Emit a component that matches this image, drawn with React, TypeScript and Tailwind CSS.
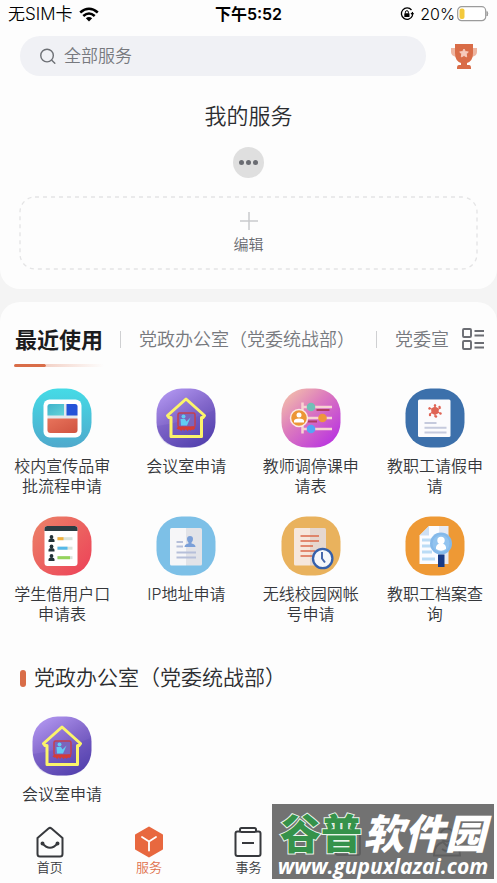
import React, { useState } from "react";

type IconProps = { id: string };
type Service = { name: string; Icon: (p: IconProps) => React.ReactElement };

function Tile({ fill, children }: { fill: string; children: React.ReactNode }) {
  return (
    <svg viewBox="0 0 60 60" className="size-[60px]" aria-hidden="true">
      <rect x="0.5" y="0.5" width="59" height="59" rx="25" fill={fill} />
      {children}
    </svg>
  );
}

function PosterIcon({ id }: IconProps) {
  return (
    <Tile fill={`url(#${id}a)`}>
      <defs>
        <linearGradient id={`${id}a`} x1="0" y1="0" x2="0" y2="1">
          <stop offset="0" stopColor="#45dbe6" />
          <stop offset="1" stopColor="#4fa9cc" />
        </linearGradient>
        <linearGradient id={`${id}b`} x1="0" y1="0" x2="1" y2="1">
          <stop offset="0" stopColor="#3fb2cb" />
          <stop offset="1" stopColor="#63d3d8" />
        </linearGradient>
        <linearGradient id={`${id}c`} x1="0" y1="0" x2="1" y2="1">
          <stop offset="0" stopColor="#e8735b" />
          <stop offset="1" stopColor="#cf5340" />
        </linearGradient>
      </defs>
      <rect x="11.5" y="11.5" width="38" height="38" rx="6" fill="#fff" />
      <rect x="15.5" y="16" width="30" height="29" rx="3" fill="#e3e8ec" />
      <path d="M18 16h14v11.5H15.5V18.5A2.5 2.5 0 0 1 18 16Z" fill={`url(#${id}b)`} />
      <path d="M34.5 16H43a2.5 2.5 0 0 1 2.5 2.5v9h-11Z" fill="#2453d8" />
      <path d="M15.500 30.500h30V42a3 3 0 0 1-3 3h-24a3 3 0 0 1-3-3Z" fill={`url(#${id}c)`} />
    </Tile>
  );
}

function MeetingIcon({ id }: IconProps) {
  return (
    <Tile fill={`url(#${id}a)`}>
      <defs>
        <linearGradient id={`${id}a`} x1="0.1" y1="0" x2="0.7" y2="1">
          <stop offset="0" stopColor="#b59af3" />
          <stop offset="0.5" stopColor="#8368cb" />
          <stop offset="1" stopColor="#5442ae" />
        </linearGradient>
      </defs>
      <path d="M1 38Q30 34 59 22V34C58 51 49 59.500 34 59.500H26C11 59.500 2 52 1 38Z" fill="#5b46b4" opacity="0.2" />
      <path
        d="M30 11 L48.500 27.500 L47 29.500 H45.500 V48.500 H15 V29.500 H13 L11.500 27.500 Z"
        fill="none"
        stroke="#fbf46a"
        strokeWidth="3"
        strokeLinejoin="round"
      />
      <rect x="22" y="25" width="17" height="14" rx="1.500" fill="#7b65bd" stroke="#c4404f" strokeWidth="1.500" />
      <path d="M21.500 41q1.500-2 3.500 0 1-2 3 0 1.500-2 3.500 0 1-2 3 0 2-2 4 0" fill="none" stroke="#d63c35" strokeWidth="2.600" />
      <circle cx="27.500" cy="28.500" r="2" fill="#62cdf3" />
      <path d="M24.500 31h4.500l1.500 2.500 4-4-3.500 8H25Z" fill="#62cdf3" />
    </Tile>
  );
}

function CourseIcon({ id }: IconProps) {
  return (
    <Tile fill={`url(#${id}a)`}>
      <defs>
        <linearGradient id={`${id}a`} x1="0.05" y1="0.1" x2="0.8" y2="0.9">
          <stop offset="0" stopColor="#f2bdab" />
          <stop offset="0.45" stopColor="#dc7abe" />
          <stop offset="1" stopColor="#bd3cdc" />
        </linearGradient>
      </defs>
      <g stroke="#f7d3d2" strokeWidth="2.500">
        <path d="M21 19h30M21 30h30M21 41h30M21.500 14.500v9M21.500 36.500v9" />
      </g>
      <path d="M35.500 22h13M26.500 33.500H36" stroke="#b23b62" strokeWidth="2" />
      <circle cx="30" cy="19" r="4.300" fill="#70bfb6" />
      <circle cx="41.500" cy="30" r="4.300" fill="#ee963b" />
      <circle cx="30" cy="41" r="4.300" fill="#55a5f5" />
      <circle cx="18" cy="30" r="8.500" fill="#ec9636" stroke="#fbe9e5" strokeWidth="1.500" />
      <circle cx="18" cy="27" r="2.500" fill="#fff" />
      <path d="M13 34.500v-1.500q0-2.500 5-2.500t5 2.500v1.500Z" fill="#fff" />
    </Tile>
  );
}

function LeaveIcon() {
  return (
    <Tile fill="#3c70ab">
      <rect x="13" y="11.500" width="32.500" height="37.500" rx="1.500" fill="#fbfbfd" />
      <g stroke="#df6455" strokeWidth="1.300" strokeLinecap="round">
        <path d="M30 17v11.500M24.500 20l11 5.500M24.500 26l11-6" />
      </g>
      <circle cx="30" cy="22.700" r="3.800" fill="#df6455" />
      <g fill="#df6455">
        <circle cx="30" cy="17.500" r="1.200" />
        <circle cx="34.500" cy="19" r="1.200" />
        <circle cx="35.500" cy="25.500" r="1.200" />
        <circle cx="31" cy="28.500" r="1.200" />
        <circle cx="25" cy="27" r="1.200" />
        <circle cx="24.500" cy="20.500" r="1.200" />
      </g>
      <path d="M19.500 35H31.500M19.500 39.700H41.500M19.500 44.500H41.500" stroke="#c5cadd" strokeWidth="2" />
    </Tile>
  );
}

function HouseholdIcon({ id }: IconProps) {
  const rows = [
    { y: 22.5, w: 6, color: "#f0b03c" },
    { y: 32, w: 10, color: "#55b9e9" },
    { y: 41.5, w: 12.5, color: "#95d45c" },
  ];
  return (
    <Tile fill={`url(#${id}a)`}>
      <defs>
        <linearGradient id={`${id}a`} x1="0" y1="0" x2="1" y2="1">
          <stop offset="0" stopColor="#eb8468" />
          <stop offset="1" stopColor="#ed4058" />
        </linearGradient>
      </defs>
      <rect x="12.500" y="10" width="33" height="40" rx="3" fill="#fff" />
      <path d="M12.500 15v-2a3 3 0 0 1 3-3h27a3 3 0 0 1 3 3v2Z" fill="#2c3d43" />
      {rows.map((r) => (
        <g key={r.y}>
          <circle cx="19.500" cy={r.y - 1.5} r="1.900" fill="#223238" />
          <path d={`M16.500 ${r.y + 3.5}v-1.500q0-2 3-2t3 2v1.500Z`} fill="#223238" />
          <rect x="25.500" y={r.y - 1.3} width="15" height="3" fill="#d9e4dc" />
          <rect x="25.500" y={r.y - 1.3} width={r.w} height="3" fill={r.color} />
        </g>
      ))}
    </Tile>
  );
}

function IpIcon() {
  return (
    <Tile fill="#7dc0e7">
      <path d="M15.500 12H30v37.500H15.500a1.500 1.500 0 0 1-1.500-1.500V13.500a1.500 1.500 0 0 1 1.500-1.500Z" fill="#f6f6f8" />
      <path d="M30 12h14.500a1.500 1.500 0 0 1 1.500 1.500V48a1.500 1.500 0 0 1-1.500 1.500H30Z" fill="#e2e3e8" />
      <path d="M20.500 26H27M20.500 30.500H27M20.500 36.500H40M20.500 41.500H40" stroke="#b6bfd9" strokeWidth="1.800" />
      <path d="M31 23a3 3 0 0 1 6 0q0 2.500-1.500 3.500v1q4 .5 4 3.500H28.500q0-3 4-3.500v-1Q31 25.500 31 23Z" fill="#7a9fd8" />
    </Tile>
  );
}

function NetworkIcon() {
  return (
    <Tile fill="#e9b25d">
      <path d="M14.500 12H29v37.500H14.500A1.500 1.500 0 0 1 13 48V13.500a1.500 1.500 0 0 1 1.500-1.500Z" fill="#f6e7dc" />
      <path d="M29 12h14.500a1.500 1.500 0 0 1 1.500 1.500V48a1.500 1.500 0 0 1-1.500 1.500H29Z" fill="#e5d7cf" />
      <path d="M19.500 20H38M19.500 25H38M19.500 30H32M19.500 35H34M19.500 40H31.500" stroke="#dc6b4b" strokeWidth="1.700" />
      <circle cx="41.700" cy="42.500" r="9.700" fill="#f5f7fb" stroke="#3560ab" strokeWidth="2.300" />
      <path d="M41 36v6.500l3 4" fill="none" stroke="#4668ac" strokeWidth="2" />
    </Tile>
  );
}

function ArchiveIcon() {
  return (
    <Tile fill="#ee9935">
      <path d="M24 10h10v38H14.500V19.500Z" fill="#fbfcff" />
      <path d="M34 10h9.500v38H34Z" fill="#e6eaf4" />
      <path d="M24 10v9.500h-9.500Z" fill="#cddff3" />
      <path d="M17 24h12M17 30h9M17 36h10M17 43h13" stroke="#bbdcf6" strokeWidth="3" />
      <circle cx="36" cy="27.500" r="11" fill="#84b9ea" />
      <circle cx="36" cy="27.500" r="8.500" fill="#91c3ef" />
      <circle cx="36" cy="24.500" r="3.700" fill="#fff" />
      <path d="M31 33q-.5-4 3-5.200h4q3.500 1.200 3 5.200-5 3.500-10 0Z" fill="#fff" />
      <path d="M33 38.500h6.500V51H33Z" fill="#173a86" />
    </Tile>
  );
}

const recent: Service[] = [
  { name: "校内宣传品审批流程申请", Icon: PosterIcon },
  { name: "会议室申请", Icon: MeetingIcon },
  { name: "教师调停课申请表", Icon: CourseIcon },
  { name: "教职工请假申请", Icon: LeaveIcon },
  { name: "学生借用户口申请表", Icon: HouseholdIcon },
  { name: "IP地址申请", Icon: IpIcon },
  { name: "无线校园网帐号申请", Icon: NetworkIcon },
  { name: "教职工档案查询", Icon: ArchiveIcon },
];

const office: Service[] = [{ name: "会议室申请", Icon: MeetingIcon }];

function ServiceGrid({ items, prefix }: { items: Service[]; prefix: string }) {
  return (
    <ul className="grid grid-cols-4 gap-y-5">
      {items.map(({ name, Icon }, i) => (
        <li key={name} className="flex justify-center">
          <button type="button" className="flex w-24 flex-col items-center gap-2">
            <Icon id={`${prefix}${i}`} />
            <span className="text-[16px] leading-5 font-[350] text-[#35373b]">{name}</span>
          </button>
        </li>
      ))}
    </ul>
  );
}

function StatusBar() {
  return (
    <div className="grid h-7 grid-cols-3 items-center px-2 text-[16px] leading-5 text-black">
      <div className="flex items-center gap-1.5">
        <span className="text-[17px] font-[350]">无SIM卡</span>
        <svg viewBox="0 0 20 15" className="h-[15px] w-5" aria-hidden="true">
          <g fill="none" stroke="#000" strokeWidth="2.600">
            <path d="M1.200 5.500Q10-2 18.800 5.500" />
            <path d="M4.300 9Q10 4 15.700 9" />
          </g>
          <path d="M6.800 11.200Q10 8.600 13.200 11.200L10 14.500Z" />
        </svg>
      </div>
      <span className="text-center font-semibold">下午5:52</span>
      <div className="flex items-center justify-end gap-0.5">
        <svg viewBox="0 0 14 14" className="mr-1 size-3.5" aria-hidden="true">
          <path d="M11.500 3A5.700 5.700 0 1 0 12.300 9" fill="none" stroke="#000" strokeWidth="1.300" />
          <path d="M12.300 9A5.700 5.700 0 0 0 12.300 5" fill="none" stroke="#000" strokeWidth="1.300" />
          <path d="M10.500 6h3.500l-1.700 2.500Z" />
          <rect x="4.300" y="6.200" width="5.200" height="3.800" rx="0.500" />
          <path d="M5.400 6.500V5.200a1.500 1.500 0 0 1 3 0v1.300" fill="none" stroke="#000" strokeWidth="1" />
        </svg>
        <span className="font-[350]">20%</span>
        <svg viewBox="0 0 32 16" className="h-4 w-8" aria-hidden="true">
          <rect x="0.700" y="0.700" width="28" height="14" rx="4" fill="#fff" stroke="#9b9b9b" strokeWidth="1.200" />
          <rect x="2.500" y="2.500" width="5" height="10.500" rx="2" fill="#f3c93c" />
          <path d="M30 5.500q1.500 2.300 0 4.500Z" fill="#9b9b9b" stroke="#9b9b9b" />
        </svg>
      </div>
    </div>
  );
}

const navIcons = {
  home: (
    <g fill="none" stroke="#37393d" strokeWidth="2">
      <path d="M3.500 12 14.500 2.500q1.500-1.200 3 0L28.500 12V28q0 2.500-2.500 2.500H6Q3.500 30.500 3.500 28Z" strokeLinejoin="round" />
      <path d="M8.500 17.500q7.500 8.500 15 0" />
      <circle cx="8.500" cy="17.500" r="1" fill="#37393d" />
      <circle cx="23.500" cy="17.500" r="1" fill="#37393d" />
    </g>
  ),
  service: (
    <g>
      <path d="M16 1.500 29 9V23L16 30.500 3 23V9Z" fill="#e8683f" stroke="#e8683f" strokeWidth="2" strokeLinejoin="round" />
      <path d="M9 11 16 15.500V24.500M16 15.500 23 11" fill="none" stroke="#fff" strokeWidth="1.800" strokeLinecap="round" />
    </g>
  ),
  task: (
    <g fill="none" stroke="#37393d" strokeWidth="2" strokeLinejoin="round">
      <path d="M8 5.500H5.500q-2 0-2 2V28q0 2 2 2h21q2 0 2-2V7.500q0-2-2-2H24" />
      <rect x="8" y="2" width="16" height="4" rx="1.500" />
      <path d="M10 17h12" />
    </g>
  ),
  message: (
    <g fill="none" stroke="#37393d" strokeWidth="2">
      <rect x="4" y="5" width="24" height="24" rx="2" />
      <path d="M9 22h14" />
    </g>
  ),
  mine: (
    <g fill="none" stroke="#37393d" strokeWidth="2">
      <circle cx="16" cy="9" r="6.500" />
      <path d="M3 29.500q0-11 9-13.500l4 4 4-4q9 2.500 9 13.500Z" />
      <path d="M11 23q5 4 10 0" />
    </g>
  ),
};

const navItems: { label?: string; name: string; icon: keyof typeof navIcons }[] = [
  { label: "首页", name: "首页", icon: "home" },
  { label: "服务", name: "服务", icon: "service" },
  { label: "事务", name: "事务", icon: "task" },
  { name: "消息", icon: "message" },
  { name: "我的", icon: "mine" },
];

function Watermark() {
  return (
    <div className="pointer-events-none absolute right-[3px] bottom-1 flex h-[75px] w-[222px] flex-col items-center overflow-hidden bg-[#636363]/90 whitespace-nowrap">
      <div className="flex gap-px pt-[9px] text-[41px] leading-[42px] font-black">
        <span className="text-[#35924a] [-webkit-text-stroke:2px_#e9f5ea] [paint-order:stroke_fill]">谷普</span>
        <span className="text-white italic">软件园</span>
      </div>
      <div className="font-['Open_Sans','Noto_Sans',sans-serif] text-[21px] leading-[22px] font-bold text-white italic">
        www.gupuxlazai.com
      </div>
    </div>
  );
}

export default function App() {
  const [query, setQuery] = useState("");
  return (
    <div className="relative flex min-h-screen flex-col bg-[#f4f4f4] font-['Inter','Noto_Sans_CJK_SC',sans-serif]">
      <header className="rounded-b-[20px] bg-[#fdfdfd] pb-5">
        <StatusBar />
        <div className="flex items-center gap-5 pt-2 pr-4 pl-5">
          <label className="flex h-10 flex-1 items-center gap-2 rounded-full bg-[#f0f1f5] pl-5">
            <svg viewBox="0 0 17 17" className="size-[17px]" aria-hidden="true">
              <g fill="none" stroke="#6d7075" strokeWidth="1.500" strokeLinecap="round">
                <circle cx="7.500" cy="7.500" r="6.700" />
                <path d="m12.800 12.800 3 3" />
              </g>
            </svg>
            <input
              type="search"
              aria-label="全部服务"
              placeholder="全部服务"
              value={query}
              onChange={(e) => setQuery(e.target.value)}
              className="w-full bg-transparent text-[17px] leading-6 font-[350] text-gray-700 outline-none placeholder:text-[#77797e]"
            />
          </label>
          <button type="button" aria-label="奖杯" className="flex w-[35px] justify-center">
            <svg viewBox="0 0 28 28" className="size-7" aria-hidden="true">
              <path d="M6 6H1v4q0 4 5.500 5ZM22 6h5v4q0 4-5.500 5Z" fill="#eeb5a0" />
              <path d="M5 2h18v9q0 8-6 10v2h2q2 0 2 3v1H7v-1q0-3 2-3h2v-2Q5 19 5 11Z" fill="#d96c47" />
              <path
                d="m14 7 1.400 2.600 2.900.4-2.100 2 .5 2.900-2.700-1.400-2.700 1.400.5-2.900-2.100-2 2.900-.4Z"
                fill="#f7cabb"
                stroke="#f7cabb"
                strokeLinejoin="round"
              />
            </svg>
          </button>
        </div>
        <h1 className="mt-6 text-center text-[22px] leading-8 font-[350] text-[#2c2d30]">我的服务</h1>
        <div className="mt-[15px] flex justify-center">
          <button type="button" aria-label="更多" className="flex size-[31px] items-center justify-center gap-0.5 rounded-full bg-[#dfdfdf]">
            <i className="size-[5px] rounded-full bg-[#6a6c72]" />
            <i className="size-[5px] rounded-full bg-[#6a6c72]" />
            <i className="size-[5px] rounded-full bg-[#6a6c72]" />
          </button>
        </div>
        <div className="mt-[19px] px-5">
          <button type="button" className="relative flex h-18 w-full flex-col items-center justify-center gap-1">
            <svg className="absolute inset-0 h-full w-full overflow-visible" aria-hidden="true">
              <rect width="100%" height="100%" rx="15" fill="none" stroke="#e4e4e5" strokeWidth="1.300" strokeDasharray="4 4" />
            </svg>
            <svg viewBox="0 0 20 20" className="size-5" aria-hidden="true">
              <path d="M10 1v18M1 10h18" stroke="#c9cacd" strokeWidth="1.500" />
            </svg>
            <span className="text-[15px] leading-5 font-[350] text-[#66686d]">编辑</span>
          </button>
        </div>
      </header>

      <main className="mt-[13px] flex-1 rounded-t-[20px] bg-[#fdfdfd]">
        <div className="flex items-start pr-3 pl-[14px]">
          <div role="tablist" aria-label="服务分类" className="flex min-w-0 flex-1 items-start overflow-hidden pt-5 whitespace-nowrap">
            <button type="button" role="tab" aria-selected="true" className="shrink-0">
              <span className="block text-[22px] leading-9 font-bold text-[#1c1c1e]">最近使用</span>
              <span className="mt-[6px] flex h-[3px] w-[90px]">
                <span className="w-8 rounded-full bg-[#d96d48]" />
                <span className="flex-1 bg-linear-to-r from-[#f3d2c7] to-[#fdfdfd]" />
              </span>
            </button>
            <span className="mt-[9px] ml-4 h-[17px] w-px shrink-0 bg-[#cfd0d2]" />
            <button type="button" role="tab" aria-selected="false" className="ml-[18px] shrink-0 text-[18px] leading-9 font-[350] text-[#77797e]">
              党政办公室（党委统战部）
            </button>
            <span className="mt-[9px] ml-[21px] h-[17px] w-px shrink-0 bg-[#cfd0d2]" />
            <button type="button" role="tab" aria-selected="false" className="ml-[18px] shrink-0 text-[18px] leading-9 font-[350] text-[#77797e]">
              党委宣
            </button>
          </div>
          <button type="button" aria-label="全部分类" className="mt-[25px]">
            <svg viewBox="0 0 24 24" className="size-6" aria-hidden="true">
              <g fill="none" stroke="#6b6d73" strokeWidth="1.900">
                <rect x="2" y="2" width="8" height="8" rx="1" />
                <rect x="2" y="14" width="8" height="8" rx="1" />
                <path d="M13.500 4H23M13.500 8.500H23M13.500 16H23M13.500 20.500H23" />
              </g>
            </svg>
          </button>
        </div>

        <section aria-label="最近使用" className="mt-[21px]">
          <ServiceGrid items={recent} prefix="r" />
        </section>

        <section className="mt-[38px]">
          <h2 className="mb-[22px] flex items-center gap-2 pl-5 text-[21px] leading-8 font-[350] text-[#2c2d30]">
            <span className="h-[17px] w-[6px] rounded-full bg-[#d96d48]" />
            党政办公室（党委统战部）
          </h2>
          <ServiceGrid items={office} prefix="o" />
        </section>
      </main>

      <nav aria-label="主导航" className="grid grid-cols-5 items-start bg-[#fdfdfd] pt-2 pb-[7px]">
        {navItems.map(({ label, name, icon }) => (
          <button key={icon} type="button" aria-label={name} className="flex flex-col items-center">
            <svg viewBox="0 0 32 32" className="size-8" aria-hidden="true">
              {navIcons[icon]}
            </svg>
            {label && (
              <span
                className={
                  icon === "service"
                    ? "text-[13px] leading-[18px] font-[350] text-[#e0704c]"
                    : "text-[13px] leading-[18px] font-[350] text-[#37393d]"
                }
              >
                {label}
              </span>
            )}
          </button>
        ))}
      </nav>
      <Watermark />
    </div>
  );
}
